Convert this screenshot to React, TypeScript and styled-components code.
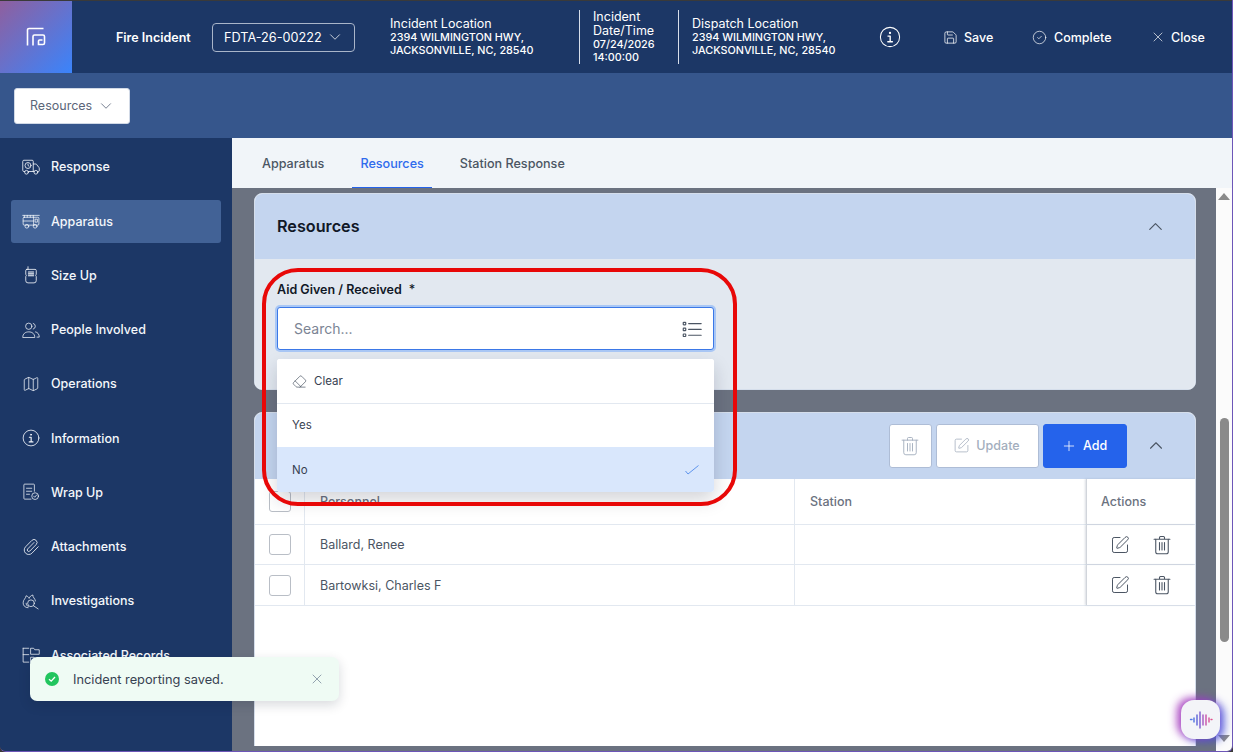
import styled, { createGlobalStyle } from "styled-components";
import { ReactNode } from "react";
import {
  ChevronDown,
  ChevronUp,
  CircleCheck,
  Eraser,
  Map as MapIcon,
  Paperclip,
  Plus,
  Save,
  SquarePen,
  X,
} from "lucide-react";

const GlobalStyle = createGlobalStyle`
  html, body {
    margin: 0;
    height: 100%;
    overflow: hidden;
    background: #3a3a3a;
  }
  * { box-sizing: border-box; }
  body {
    font-family: Inter, "Liberation Sans", sans-serif;
    color: #1f2937;
  }
`;

const Page = styled.div`
  position: relative;
  width: 1233px;
  height: 752px;
  display: flex;
  flex-direction: column;
  overflow: hidden;
  padding-top: 1px;
  border-right: 1px solid #6d56b8;
  border-bottom: 1px solid #6d56b8;
  border-bottom-left-radius: 6px;
  border-bottom-right-radius: 6px;
`;

const TopBar = styled.header`
  height: 72px;
  flex: none;
  display: flex;
  align-items: center;
  background: #1c3766;
  color: #fff;
`;

const Logo = styled.div`
  width: 72px;
  height: 100%;
  display: flex;
  align-items: center;
  justify-content: center;
  background: linear-gradient(135deg, #8f5f9e 0%, #6a70c8 45%, #3a84fb 100%);
`;

const Title = styled.div`
  margin-left: 44px;
  width: 96px;
  font-size: 12.5px;
  font-weight: 600;
`;

const IncidentSelect = styled.div`
  width: 143px;
  height: 29px;
  display: flex;
  align-items: center;
  justify-content: space-between;
  padding: 0 10px 0 11px;
  border: 1px solid #a9b5c9;
  border-radius: 4px;
  font-size: 12.7px;
  white-space: nowrap;
`;

const InfoBlock = styled.div<{ $width: number; $divider?: boolean }>`
  width: ${(p) => p.$width}px;
  height: 54px;
  display: flex;
  flex-direction: column;
  justify-content: center;
  padding-left: ${(p) => (p.$divider ? 13 : 0)}px;
  border-left: ${(p) => (p.$divider ? "1px solid #d7deea" : "none")};
`;

const InfoTitle = styled.div`
  font-size: 12.5px;
  line-height: 14px;
`;

const InfoLine = styled.div`
  font-size: 10.8px;
  line-height: 13px;
  font-weight: 500;
  white-space: nowrap;
`;

const Locations = styled.div`
  margin-left: 35px;
  display: flex;
  align-items: center;
`;

const TopActions = styled.div`
  margin-left: 33px;
  display: flex;
  align-items: center;
`;

const TopAction = styled.div<{ $width: number; $gap: number }>`
  width: ${(p) => p.$width}px;
  display: flex;
  align-items: center;
  gap: ${(p) => p.$gap}px;
  font-size: 12.5px;
  font-weight: 500;
  white-space: nowrap;
`;

const InfoIconWrap = styled.div`
  width: 64px;
  display: flex;
`;

const SubBar = styled.div`
  height: 65px;
  flex: none;
  display: flex;
  align-items: center;
  padding-left: 14px;
  background: #36568c;
`;

const SectionSelect = styled.div`
  width: 116px;
  height: 36px;
  display: flex;
  align-items: center;
  gap: 5px;
  padding-left: 15px;
  background: #fff;
  border: 1px solid #d1d9e6;
  border-radius: 3px;
  font-size: 12.5px;
  color: #5b6679;
`;

const Body = styled.div`
  flex: 1;
  min-height: 0;
  display: flex;
`;

const Sidebar = styled.nav`
  width: 232px;
  flex: none;
  display: flex;
  flex-direction: column;
  gap: 11.25px;
  padding: 7.3px 11px 0;
  background: #1c3766;
`;

const NavItem = styled.div<{ $active?: boolean }>`
  height: 43px;
  flex: none;
  display: flex;
  align-items: center;
  gap: 11px;
  padding-left: 11px;
  border-radius: 3px;
  background: ${(p) => (p.$active ? "#426296" : "transparent")};
  color: #f4f7fb;
  font-size: 12.5px;
  font-weight: 500;
  white-space: nowrap;
`;

const Content = styled.main`
  flex: 1;
  min-width: 0;
  display: flex;
  flex-direction: column;
`;

const Tabs = styled.div`
  height: 50px;
  flex: none;
  display: flex;
  gap: 20px;
  padding-left: 22px;
  background: #f1f5f9;
`;

const Tab = styled.div<{ $active?: boolean }>`
  display: flex;
  align-items: center;
  padding: 1px 8px 0;
  font-size: 12.6px;
  font-weight: 500;
  color: ${(p) => (p.$active ? "#2f6bed" : "#4b5563")};
  border-bottom: 1px solid ${(p) => (p.$active ? "#2563eb" : "transparent")};
`;

const Viewport = styled.div`
  flex: 1;
  min-height: 0;
  display: flex;
  background: #6b7280;
`;

const Scroller = styled.div`
  flex: 1;
  min-width: 0;
  margin-bottom: 5px;
  padding: 5px 0 0 22px;
  display: flex;
  flex-direction: column;
  gap: 22px;
  overflow: hidden;
`;

const Card = styled.section<{ $height: number }>`
  width: 942px;
  height: ${(p) => p.$height}px;
  flex: none;
  background: #fff;
  border: 1px solid #d5deeb;
  border-radius: 8px;
  overflow: hidden;
  display: flex;
  flex-direction: column;
`;

const CardHeader = styled.div<{ $height: number }>`
  height: ${(p) => p.$height}px;
  flex: none;
  display: flex;
  align-items: center;
  justify-content: flex-end;
  padding: 0 28px ${(p) => p.$height - 65}px 0;
  background: #c4d5ef;
  color: #4b5563;
`;

const CardTitle = styled.h2`
  margin: 0 auto 2px 22px;
  font-size: 16.2px;
  font-weight: 600;
  color: #111827;
`;

const CardBody = styled.div`
  flex: 1;
  padding: 22px 22px 0;
  background: #e2e8f0;
`;

const FieldLabel = styled.label`
  display: block;
  height: 18px;
  font-size: 12.5px;
  line-height: 18px;
  font-weight: 600;
  color: #111827;
`;

const Required = styled.span`
  margin-left: 7px;
  font-weight: 500;
`;

const SearchBox = styled.div`
  width: 437px;
  height: 43px;
  margin-top: 8px;
  display: flex;
  align-items: center;
  justify-content: space-between;
  padding: 0 11px 1px 16px;
  background: #fff;
  border: 1px solid #3b78e7;
  border-radius: 3px;
  box-shadow: 0 0 0 2px #a9c7f5;
  font-size: 14px;
  color: #7b8494;
`;

const ListGlyph = styled.span`
  display: flex;
  margin-top: 1px;
  color: #4b5563;
`;

const Dropdown = styled.div`
  position: absolute;
  left: 277px;
  top: 359px;
  width: 437px;
  background: #fff;
  border-radius: 3px;
  box-shadow: 0 8px 18px rgba(15, 23, 42, 0.18);
  overflow: hidden;
  font-size: 11.5px;
  color: #374151;
`;

const Option = styled.div<{ $selected?: boolean; $height: number; $lift?: number }>`
  height: ${(p) => p.$height}px;
  display: flex;
  align-items: center;
  justify-content: space-between;
  padding: 0 15px ${(p) => p.$lift ?? 0}px;
  background: ${(p) => (p.$selected ? "#d9e7fc" : "#fff")};
  border-top: ${(p) => (p.$selected ? "none" : "1px solid #e2e8f0")};
  &:first-child { border-top: none; }
`;

const OptionLabel = styled.span`
  display: flex;
  align-items: center;
  gap: 7px;
`;

const ToolButton = styled.button<{ $width: number; $primary?: boolean }>`
  width: ${(p) => p.$width}px;
  height: 44px;
  margin-left: 4px;
  display: flex;
  align-items: center;
  justify-content: center;
  gap: 6px;
  padding: 0 2px 0 0;
  font-family: inherit;
  font-size: 12.5px;
  font-weight: 500;
  border-radius: 3px;
  border: 1px solid ${(p) => (p.$primary ? "#2563eb" : "#aebdd6")};
  background: ${(p) => (p.$primary ? "#2563eb" : "#fff")};
  color: ${(p) => (p.$primary ? "#fff" : "#a3aebd")};
`;

const CollapseIcon = styled.div`
  margin-left: 18px;
  width: 22px;
  display: flex;
  justify-content: center;
`;

const Row = styled.div<{ $height: number }>`
  height: ${(p) => p.$height}px;
  flex: none;
  display: grid;
  grid-template-columns: 49px 490px 292px 1fr;
  border-bottom: 1px solid #e2e8f0;
`;

const Cell = styled.div<{ $head?: boolean }>`
  display: flex;
  align-items: center;
  padding-left: 15px;
  border-left: 1px solid #e2e8f0;
  font-size: 12.5px;
  font-weight: ${(p) => (p.$head ? 500 : 400)};
  color: ${(p) => (p.$head ? "#6b7280" : "#4b5563")};
`;

const CheckCell = styled.div`
  display: flex;
  align-items: center;
  justify-content: center;
`;

const Checkbox = styled.div`
  width: 22px;
  height: 21px;
  background: #fff;
  border: 1px solid #b9bec6;
  border-radius: 3px;
`;

const ActionCell = styled(Cell)`
  gap: 22px;
  padding-left: ${(p) => (p.$head ? 14 : 23)}px;
  color: ${(p) => (p.$head ? "#6b7280" : "#4b5563")};
  border-left: 1px solid #d1d5db;
  box-shadow: -1px 0 2px rgba(100, 116, 139, 0.25);
`;

const ScrollTrack = styled.div`
  width: 16px;
  flex: none;
  position: relative;
  background: #fbfbfb;
`;

const ScrollThumb = styled.div`
  position: absolute;
  left: 4px;
  top: 230px;
  width: 9px;
  height: 224px;
  border-radius: 5px;
  background: #8a8a8a;
`;

const ScrollArrow = styled.div<{ $down?: boolean }>`
  position: absolute;
  left: 2px;
  ${(p) => (p.$down ? "bottom: 9px;" : "top: 5px;")}
  width: 0;
  height: 0;
  border-left: 6px solid transparent;
  border-right: 6px solid transparent;
  ${(p) => (p.$down ? "border-top: 7px solid #8a8a8a;" : "border-bottom: 7px solid #8a8a8a;")}
`;

const Highlight = styled.div`
  position: absolute;
  left: 262px;
  top: 268px;
  width: 475px;
  height: 238px;
  border: 4px solid #e80808;
  border-radius: 36px;
  pointer-events: none;
`;

const Toast = styled.div`
  position: absolute;
  left: 30px;
  top: 657px;
  width: 309px;
  height: 44px;
  display: flex;
  align-items: center;
  padding: 0 14px 0 15px;
  background: #effbf4;
  border-radius: 7px;
  box-shadow: 0 4px 12px rgba(15, 23, 42, 0.16);
  font-size: 12.8px;
  color: #374151;
`;

const ToastText = styled.span`
  flex: 1;
  margin-left: 14px;
`;

const VoiceButton = styled.div`
  position: absolute;
  left: 1181px;
  top: 700px;
  width: 39px;
  height: 39px;
  display: flex;
  align-items: center;
  justify-content: center;
  background: #f3f4f8;
  border-radius: 13px;
  box-shadow: -4px -2px 9px rgba(168, 60, 190, 0.9), 4px 2px 9px rgba(70, 80, 220, 0.9);
`;

type IconProps = { size?: number; children: ReactNode; stroke?: number };

const Glyph = ({ size = 18, children, stroke = 1 }: IconProps) => (
  <svg
    width={size}
    height={size}
    viewBox="0 0 24 24"
    fill="none"
    stroke="currentColor"
    strokeWidth={stroke}
    strokeLinecap="round"
    strokeLinejoin="round"
    style={{ flex: "none" }}
  >
    {children}
  </svg>
);

const LogoMark = () => (
  <svg width="20" height="20" viewBox="0 0 20 20" fill="none" stroke="#fff" strokeWidth="1.6">
    <path d="M1.500 18.500V3a1.500 1.500 0 0 1 1.500-1.500H17.500" />
    <path d="M7 18.500V9.500a1.500 1.500 0 0 1 1.500-1.500H17a1.500 1.500 0 0 1 1.500 1.500V16a1.500 1.500 0 0 1-1.500 1.500H12.500V14a1 1 0 0 1 1-1H16.500" />
  </svg>
);

const InfoCircle = ({ size = 18 }: { size?: number }) => (
  <Glyph size={size} stroke={1.1}>
    <circle cx="12" cy="12" r="10.500" />
    <circle cx="12" cy="7.600" r="0.700" fill="currentColor" />
    <path d="M9.800 11h2.400v6M9.600 17.200h5" strokeWidth="1.500" />
  </Glyph>
);

const ResponseIcon = () => (
  <Glyph stroke={1.1}>
    <path d="M3.500 18H2.500a1.500 1.500 0 0 1-1.500-1.500v-12A1.500 1.500 0 0 1 2.500 3h11A1.500 1.500 0 0 1 15 4.500V18H8.500" />
    <path d="M15 8h3.500a1 1 0 0 1 .8.400l3.400 4.400a1 1 0 0 1 .3.700V17a1 1 0 0 1-1 1h-.5M15 18h1" />
    <circle cx="6" cy="19" r="2.500" />
    <circle cx="18.500" cy="19" r="2.500" />
    <circle cx="8" cy="10" r="4" />
    <path d="M8 8v2l1.400 1" />
  </Glyph>
);

const ApparatusIcon = () => (
  <Glyph>
    <path d="M1 4.500h22M3 4.500v2.500M7 4.500v2.500M11 4.500v2.500M15 4.500v2.500" />
    <rect x="1.500" y="7" width="21" height="10.500" rx="1.500" />
    <path d="M1.500 12h14M15.500 7v10.500M18 9.500h2.500v4H18z" />
    <circle cx="6.500" cy="19" r="2.500" />
    <circle cx="17.500" cy="19" r="2.500" />
  </Glyph>
);

const RadioIcon = () => (
  <Glyph stroke={1.1}>
    <path d="M8 4.500V1M6.500 4.500h11A1.500 1.500 0 0 1 19 6v5l-.8 1.500.8 1.500v5.500a3 3 0 0 1-3 3H8a3 3 0 0 1-3-3V14l.8-1.500L5 11V6a1.500 1.500 0 0 1 1.500-1.500Z" />
    <path d="M8.500 8h7M8.500 10.500h7M8.500 13h7" strokeWidth="1.400" />
  </Glyph>
);

const PeopleIcon = () => (
  <Glyph>
    <circle cx="9" cy="7" r="4.200" />
    <path d="M1 21.500c0-4.500 3.400-7 8-7s8 2.500 8 7ZM15 3.200a4 4 0 0 1 0 7.600M18 14.500c3 .6 5 3 5 7h-3" />
  </Glyph>
);

const WrapUpIcon = () => (
  <Glyph>
    <path d="M12 21.500H3.500a1 1 0 0 1-1-1V2.500a1 1 0 0 1 1-1h12a1 1 0 0 1 1 1V11" />
    <path d="M6 7h7M6 11h7M6 15h4" />
    <circle cx="17.500" cy="17.500" r="4.500" />
    <path d="m15.500 17.500 1.500 1.500 2.500-3" />
  </Glyph>
);

const InvestigationIcon = () => (
  <Glyph>
    <path d="M8 21c-4 0-6.500-3-6.500-6.500C1.500 10 5 9 5.500 5 8 6 9 7 9.500 8.500 10.500 6 12 4.500 14.500 4c-.5 3 3 4.500 3.500 8" />
    <circle cx="12" cy="15" r="4.500" />
    <path d="m15.500 18.500 6 4M5.500 15c0 2 1 3.500 3 4.500" />
  </Glyph>
);

const FolderTreeIcon = () => (
  <Glyph>
    <path d="M1.500 3v18.500H9M1.500 11.500H9M1.500 3H9" />
    <path d="M12 3h3.500l1.500 2h6v6H12zM12 15h4l1.500 2H23v5H12z" />
  </Glyph>
);

const ListIcon = () => (
  <Glyph size={20} stroke={1.400}>
    <rect x="1.500" y="4" width="3" height="3" rx="0.600" />
    <rect x="1.500" y="11" width="3" height="3" rx="0.600" />
    <rect x="1.500" y="18" width="3" height="3" rx="0.600" />
    <path d="M8 5.500h15M8 12.500h15M8 19.500h15" />
  </Glyph>
);

const TrashIcon = ({ size = 20, stroke = 1.1 }: { size?: number; stroke?: number }) => (
  <Glyph size={size} stroke={stroke}>
    <path d="M2.500 5h19M9 5V3a1.200 1.200 0 0 1 1.200-1.200h3.600A1.200 1.200 0 0 1 15 3v2" />
    <path d="M4.500 5v15a2.500 2.500 0 0 0 2.500 2.500h10a2.500 2.500 0 0 0 2.500-2.500V5" />
    <path d="M9 9v9M12 9v9M15 9v9" />
  </Glyph>
);

const SoundWave = () => (
  <svg width="24" height="20" viewBox="0 0 24 20" fill="none" strokeWidth="1.400" strokeLinecap="round">
    <path d="M1.500 9.500h1.500" stroke="#4f7be8" />
    <path d="M5 8v4" stroke="#4f6fe0" />
    <path d="M8 5v10" stroke="#5a62d8" />
    <path d="M11 2v16" stroke="#7a5ad0" />
    <path d="M14 5v10" stroke="#a455c0" />
    <path d="M17 5v10" stroke="#c64fa8" />
    <path d="M20 8v4" stroke="#d84f98" />
    <path d="M22 9.500h1" stroke="#e0508e" />
  </svg>
);

const ThinCheck = () => (
  <svg width="14" height="10" viewBox="0 0 14 10" fill="none" stroke="#3f7fe8" strokeWidth="0.800">
    <path d="M0.500 6l2.500 3L13.500 0.500" />
  </svg>
);

const NAV_ITEMS: { label: string; icon: ReactNode; active?: boolean }[] = [
  { label: "Response", icon: <ResponseIcon /> },
  { label: "Apparatus", icon: <ApparatusIcon />, active: true },
  { label: "Size Up", icon: <RadioIcon /> },
  { label: "People Involved", icon: <PeopleIcon /> },
  { label: "Operations", icon: <MapIcon size={18} strokeWidth={1} /> },
  { label: "Information", icon: <InfoCircle /> },
  { label: "Wrap Up", icon: <WrapUpIcon /> },
  { label: "Attachments", icon: <Paperclip size={18} strokeWidth={1.1} /> },
  { label: "Investigations", icon: <InvestigationIcon /> },
  { label: "Associated Records", icon: <FolderTreeIcon /> },
];

const PERSONNEL = [
  { name: "Ballard, Renee", height: 40 },
  { name: "Bartowksi, Charles F", height: 41 },
];

const App = () => {
  return (
    <Page>
      <GlobalStyle />
      <TopBar>
        <Logo>
          <LogoMark />
        </Logo>
        <Title>Fire Incident</Title>
        <IncidentSelect>
          FDTA-26-00222
          <ChevronDown size={18} strokeWidth={1} />
        </IncidentSelect>
        <Locations>
          <InfoBlock $width={189}>
            <InfoTitle>Incident Location</InfoTitle>
            <InfoLine>2394 WILMINGTON HWY,</InfoLine>
            <InfoLine>JACKSONVILLE, NC, 28540</InfoLine>
          </InfoBlock>
          <InfoBlock $width={99} $divider>
            <InfoTitle>Incident</InfoTitle>
            <InfoTitle>Date/Time</InfoTitle>
            <InfoLine>07/24/2026</InfoLine>
            <InfoLine>14:00:00</InfoLine>
          </InfoBlock>
          <InfoBlock $width={168} $divider>
            <InfoTitle>Dispatch Location</InfoTitle>
            <InfoLine>2394 WILMINGTON HWY,</InfoLine>
            <InfoLine>JACKSONVILLE, NC, 28540</InfoLine>
          </InfoBlock>
        </Locations>
        <TopActions>
          <InfoIconWrap>
            <InfoCircle size={22} />
          </InfoIconWrap>
          <TopAction $width={89} $gap={6}>
            <Save size={15} strokeWidth={1.2} />
            Save
          </TopAction>
          <TopAction $width={118} $gap={7}>
            <CircleCheck size={15} strokeWidth={1.1} />
            Complete
          </TopAction>
          <TopAction $width={60} $gap={5}>
            <X size={16} strokeWidth={1} />
            Close
          </TopAction>
        </TopActions>
      </TopBar>
      <SubBar>
        <SectionSelect>
          Resources
          <ChevronDown size={18} strokeWidth={1.1} />
        </SectionSelect>
      </SubBar>
      <Body>
        <Sidebar>
          {NAV_ITEMS.map((item) => (
            <NavItem key={item.label} $active={item.active}>
              {item.icon}
              {item.label}
            </NavItem>
          ))}
        </Sidebar>
        <Content>
          <Tabs>
            <Tab>Apparatus</Tab>
            <Tab $active>Resources</Tab>
            <Tab>Station Response</Tab>
          </Tabs>
          <Viewport>
            <Scroller>
              <Card $height={197}>
                <CardHeader $height={65}>
                  <CardTitle>Resources</CardTitle>
                  <ChevronUp size={23} strokeWidth={1.2} />
                </CardHeader>
                <CardBody>
                  <FieldLabel>
                    Aid Given / Received<Required>*</Required>
                  </FieldLabel>
                  <SearchBox>
                    Search...
                    <ListGlyph>
                      <ListIcon />
                    </ListGlyph>
                  </SearchBox>
                </CardBody>
              </Card>
              <Card $height={380}>
                <CardHeader $height={66}>
                  <ToolButton $width={43}>
                    <TrashIcon />
                  </ToolButton>
                  <ToolButton $width={103}>
                    <SquarePen size={17} strokeWidth={1.1} />
                    Update
                  </ToolButton>
                  <ToolButton $width={84} $primary>
                    <Plus size={16} strokeWidth={1.2} />
                    Add
                  </ToolButton>
                  <CollapseIcon>
                    <ChevronUp size={23} strokeWidth={1.2} />
                  </CollapseIcon>
                </CardHeader>
                <Row $height={46}>
                  <CheckCell>
                    <Checkbox />
                  </CheckCell>
                  <Cell $head>Personnel</Cell>
                  <Cell $head>Station</Cell>
                  <ActionCell $head>Actions</ActionCell>
                </Row>
                {PERSONNEL.map((person) => (
                  <Row key={person.name} $height={person.height}>
                    <CheckCell>
                      <Checkbox />
                    </CheckCell>
                    <Cell>{person.name}</Cell>
                    <Cell />
                    <ActionCell>
                      <SquarePen size={20} strokeWidth={1.2} />
                      <TrashIcon size={20} stroke={1.3} />
                    </ActionCell>
                  </Row>
                ))}
              </Card>
            </Scroller>
            <ScrollTrack>
              <ScrollArrow />
              <ScrollThumb />
              <ScrollArrow $down />
            </ScrollTrack>
          </Viewport>
        </Content>
      </Body>
      <Dropdown>
        <Option $height={44}>
          <OptionLabel>
            <Eraser size={15} strokeWidth={1} />
            Clear
          </OptionLabel>
        </Option>
        <Option $height={44} $lift={2}>
          Yes
        </Option>
        <Option $height={45} $selected>
          No
          <ThinCheck />
        </Option>
      </Dropdown>
      <Highlight />
      <Toast>
        <svg width="14" height="14" viewBox="0 0 14 14">
          <circle cx="7" cy="7" r="7" fill="#22c55e" />
          <path d="M4 7.200 6.200 9.200 10 5" stroke="#fff" strokeWidth="1.300" fill="none" />
        </svg>
        <ToastText>Incident reporting saved.</ToastText>
        <X size={16} strokeWidth={1} color="#64748b" />
      </Toast>
      <VoiceButton>
        <SoundWave />
      </VoiceButton>
    </Page>
  );
};

export default App;
